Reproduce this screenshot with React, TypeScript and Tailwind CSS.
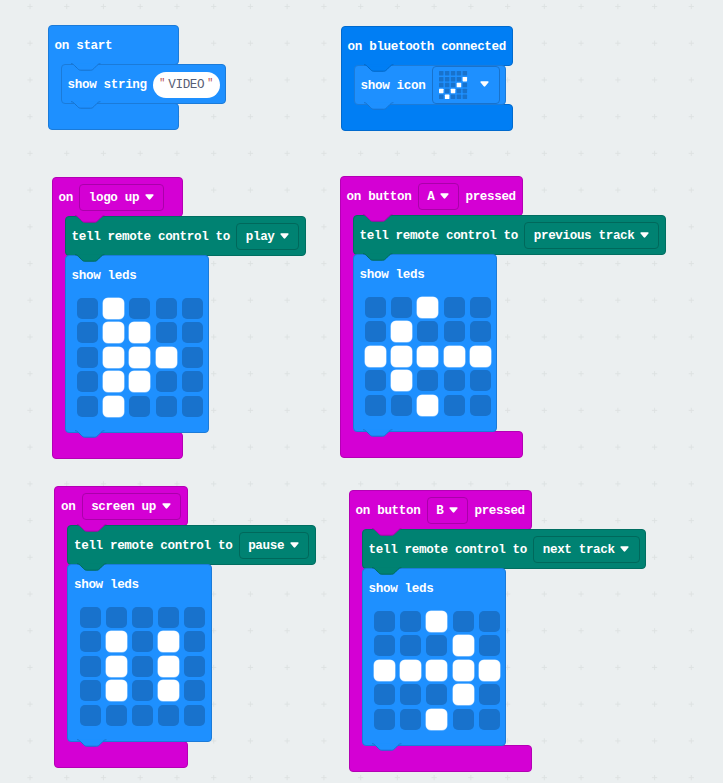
import type { ReactNode } from "react";

type Tone = "basic" | "bluetooth" | "input" | "devices";

const TONES: Record<Tone, { box: string; fill: string; stroke: string; field: string }> = {
  basic: { box: "bg-[#1e90ff] border-[#1b7bd9]", fill: "#1e90ff", stroke: "#1872cc", field: "border-[#1872cc]" },
  bluetooth: { box: "bg-[#007ef4] border-[#006ace]", fill: "#007ef4", stroke: "#0065c3", field: "border-[#0065c3]" },
  input: { box: "bg-[#d400d4] border-[#b400b4]", fill: "#d400d4", stroke: "#aa00aa", field: "border-[#aa00aa]" },
  devices: { box: "bg-[#008272] border-[#006e61]", fill: "#008272", stroke: "#00685b", field: "border-[#00685b]" },
};

const GRID_COLUMNS = Array.from({ length: 20 }, (_, i) => 30 + i * 36.74);
const GRID_ROWS = Array.from({ length: 22 }, (_, i) => 6.5 + i * 36.72);

function GridMarks() {
  return (
    <svg className="absolute inset-0" width="723" height="783" stroke="#dde1e1" strokeWidth="0.9">
      {GRID_ROWS.map((y) =>
        GRID_COLUMNS.map((x) => <path key={`${x}-${y}`} d={`M${x - 2.6} ${y}h5.2M${x} ${y - 2.6}v5.2`} />),
      )}
    </svg>
  );
}

/* The puzzle tab that joins one block to the next. */
function Tab({ tone }: { tone: Tone }) {
  const { fill, stroke } = TONES[tone];
  const curve = "c2 0 3 1 4 2l4 4c1 1 2 2 4 2h12c2 0 3 -1 4 -2l4 -4c1 -1 2 -2 4 -2";
  return (
    <svg className="absolute -top-px left-[9px] z-20 overflow-visible" width="29.4" height="8" viewBox="0 0 36 9.8">
      <path d={`M0 -0.2${curve}Z`} fill={fill} />
      <path d="M3 0.5H33" stroke={fill} strokeWidth="1.6" />
      <path d={`M0 -0.4${curve}`} fill="none" stroke={stroke} strokeWidth="1.2" />
    </svg>
  );
}

function Arrow() {
  return (
    <svg width="9" height="6" viewBox="0 0 9 6" className="mb-px shrink-0">
      <path d="M1.2 0.2h6.6c0.9 0 1.2 0.8 0.6 1.4L5.3 5.2c-0.5 0.6-1.1 0.6-1.6 0L0.6 1.6C0 1 0.3 0.2 1.2 0.2Z" fill="#fff" />
    </svg>
  );
}

function Dropdown({ tone, children }: { tone: Tone; children: string }) {
  return (
    <span className={`flex h-[27px] items-center gap-[5.6px] rounded-[4px] border pr-[9.3px] pl-[8.6px] ${TONES[tone].field}`}>
      <span>{children}</span>
      <Arrow />
    </span>
  );
}

function Statement({ tone, above, width, children }: { tone: Tone; above: Tone; width: string; children: ReactNode }) {
  return (
    <div className={`relative rounded-[4px] border ${TONES[tone].box} ${width}`}>
      <Tab tone={above} />
      {children}
    </div>
  );
}

function Row({ children }: { children: ReactNode }) {
  return <div className="flex h-[38.4px] items-center gap-[6.2px] pt-[1.2px] pl-[5.6px]">{children}</div>;
}

interface EventProps {
  tone: Tone;
  place: string;
  width: string;
  header: ReactNode;
  last: Tone;
  children: ReactNode;
}

function EventBlock({ tone, place, width, header, last, children }: EventProps) {
  const { box } = TONES[tone];
  return (
    <section className={`absolute flex flex-col items-start ${place}`}>
      <div className={`h-[40px] rounded-[4px] rounded-bl-none border ${box} ${width}`}>
        <Row>{header}</Row>
      </div>
      <div className="relative z-10 -my-px flex">
        <div className={`w-[20px] border-l ${box}`} />
        <div className="-ml-[7px] flex flex-col items-start">{children}</div>
      </div>
      <div className={`relative h-[27px] rounded-[4px] rounded-tl-none border ${box} ${width}`}>
        <div className="absolute -top-px left-[13px]">
          <Tab tone={last} />
        </div>
      </div>
    </section>
  );
}

function Leds({ rows }: { rows: string[] }) {
  return (
    <div className="mt-[3.2px] mb-[15px] ml-[11.3px] grid grid-cols-[repeat(5,21px)] grid-rows-[repeat(5,21px)] gap-x-[5.1px] gap-y-[3.5px]">
      {rows.join("").split("").map((cell, i) => (
        <span
          key={i}
          className={cell === "#" ? "rounded-[5px] bg-white shadow-[0_0_0_0.5px_#ffffffb0]" : "rounded-[5px] bg-[#1872cc]"}
        />
      ))}
    </div>
  );
}

function RemoteEvent({ place, width, header, command, commandWidth, leds }: {
  place: string; width: string; header: ReactNode; command: string; commandWidth: string; leds: string[];
}) {
  return (
    <EventBlock tone="input" place={place} width={width} header={header} last="basic">
      <Statement tone="devices" above="input" width={commandWidth}>
        <Row>
          <span>tell remote control to</span>
          <Dropdown tone="devices">{command}</Dropdown>
        </Row>
      </Statement>
      <div className="-mt-px">
        <Statement tone="basic" above="devices" width="w-[144.4px]">
          <Row>show leds</Row>
          <Leds rows={leds} />
        </Statement>
      </div>
    </EventBlock>
  );
}

const CHECK = [".....", "....#", "...#.", "#.#..", ".#..."];

function IconField() {
  return (
    <span className="-mt-[1.6px] flex h-[38px] w-[68.5px] items-center gap-[12.6px] rounded-[4px] border border-[#1872cc] pl-[6.6px]">
      <svg width="28.4" height="28.4" viewBox="0 0 28.4 28.4">
        {CHECK.map((row, y) =>
          row.split("").map((cell, x) => (
            <rect
              key={`${x}-${y}`}
              x={x * 5.9}
              y={y * 5.9}
              width="4.5"
              height="4.5"
              rx="0.6"
              fill={cell === "#" ? "#fff" : "#1872cc"}
            />
          )),
        )}
      </svg>
      <Arrow />
    </span>
  );
}

export default function App() {
  return (
    <main className="relative h-[783px] w-[723px] overflow-hidden bg-[#ebeff0] font-['Liberation_Mono',monospace] text-[12.6px] leading-[14px] font-bold tracking-[-0.36px] whitespace-pre text-white">
      <GridMarks />

      <EventBlock tone="basic" place="left-[48px] top-[25px]" width="w-[131px]" header="on start" last="basic">
        <Statement tone="basic" above="basic" width="w-[165px]">
          <Row>
            <span>show string</span>
            <span className="flex h-[26px] w-[66.6px] items-center justify-center gap-[3px] rounded-full bg-white font-normal text-[#575e75]">
              <span className="w-[6px] pb-[2px] text-[10px] text-[#b84848]">"</span>
              <span>VIDEO</span>
              <span className="w-[6px] pb-[2px] text-[10px] text-[#b84848]">"</span>
            </span>
          </Row>
        </Statement>
      </EventBlock>

      <EventBlock tone="bluetooth" place="left-[341px] top-[26px]" width="w-[171.6px]" header="on bluetooth connected" last="basic">
        <Statement tone="basic" above="bluetooth" width="w-[152.4px]">
          <Row>
            <span>show icon</span>
            <IconField />
          </Row>
        </Statement>
      </EventBlock>

      <RemoteEvent
        place="left-[52px] top-[177px]"
        width="w-[131px]"
        header={<><span>on</span><Dropdown tone="input">logo up</Dropdown></>}
        command="play"
        commandWidth="w-[241.2px]"
        leds={[".#...", ".##..", ".###.", ".##..", ".#..."]}
      />
      <RemoteEvent
        place="left-[340px] top-[176px]"
        width="w-[183.3px]"
        header={<><span>on button</span><Dropdown tone="input">A</Dropdown><span>pressed</span></>}
        command="previous track"
        commandWidth="w-[313.2px]"
        leds={["..#..", ".#...", "#####", ".#...", "..#.."]}
      />
      <RemoteEvent
        place="left-[54.4px] top-[486px]"
        width="w-[133.4px]"
        header={<><span>on</span><Dropdown tone="input">screen up</Dropdown></>}
        command="pause"
        commandWidth="w-[248.2px]"
        leds={[".....", ".#.#.", ".#.#.", ".#.#.", "....."]}
      />
      <RemoteEvent
        place="left-[349px] top-[490px]"
        width="w-[183.3px]"
        header={<><span>on button</span><Dropdown tone="input">B</Dropdown><span>pressed</span></>}
        command="next track"
        commandWidth="w-[284.3px]"
        leds={["..#..", "...#.", "#####", "...#.", "..#.."]}
      />
    </main>
  );
}
